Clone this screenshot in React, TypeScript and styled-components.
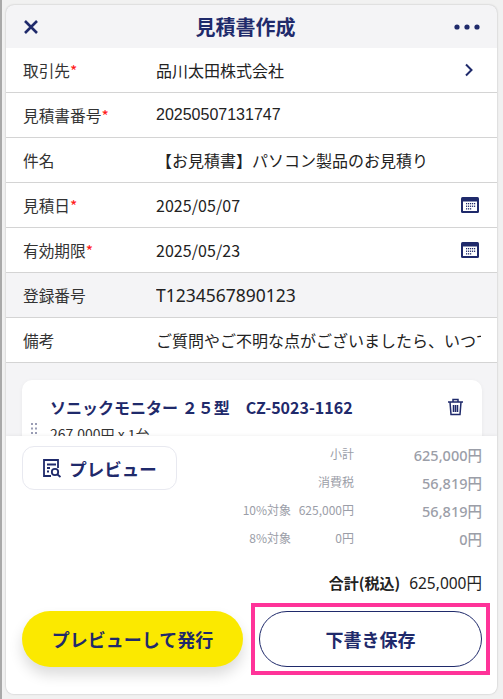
import React from "react";
import styled, { createGlobalStyle } from "styled-components";

const Global = createGlobalStyle`
  html, body { margin: 0; padding: 0; background: #f1f1f1; }
  body { font-family: "Noto Sans", "Noto Sans CJK JP", sans-serif; }
  * { box-sizing: border-box; }
`;
const NAVY = "#1f2a6b";
const Page = styled.div`
  width: 503px; height: 699px; padding: 5px 6px 5px 4px;
  border-left: 2px solid #a9a9a9;
  overflow: hidden;
`;
const Card = styled.div`
  width: 491px; height: 689px; border-radius: 8px; overflow: hidden; background: #f4f4f6;
  display: flex; flex-direction: column;
  box-shadow: 0 0 2px rgba(0,0,0,.25);
`;
const Header = styled.header`
  height: 43px; flex: none; display: flex; align-items: center; justify-content: space-between;
  padding: 0 17px 0 17px; position: relative; color: ${NAVY};
`;
const Title = styled.h1`
  margin: 0; position: absolute; left: 0; right: 12px; text-align: center;
  font: 700 20px "Noto Sans CJK JP", sans-serif; color: ${NAVY}; pointer-events: none;
`;
const IconSlot = styled.span`display: inline-flex; align-items: center; justify-content: center; flex: none;`;
const Chevron = styled(IconSlot)`margin-right: 5px;`;
const Row = styled.div<{ $gray?: boolean }>`
  height: 45px; flex: none; display: flex; align-items: center; padding: 0 18px 0 17px;
  background: ${(p) => (p.$gray ? "#f4f4f6" : "#fff")}; border-bottom: 1px solid #d4d4d4;
`;
const Label = styled.div`
  width: 133px; flex: none; font: 400 15.7px "Noto Sans CJK JP", sans-serif; color: #333;
  em { color: #ff1a1a; font-style: normal; }
`;
const Value = styled.div<{ $kind?: "date" | "mono" | "num" }>`
  flex: 1; min-width: 0; white-space: nowrap; overflow: hidden; color: #222;
  font: 400 16px "Noto Sans CJK JP", sans-serif;
  ${(p) => p.$kind === "date" && `letter-spacing: .05px;`}
  ${(p) => p.$kind === "num" && `font: 400 16px "Liberation Sans", sans-serif;`}
  ${(p) => p.$kind === "mono" && `font: 400 17.5px "Noto Sans", sans-serif;`}
`;
const Note = styled(Value)`flex: none; width: 325px; `;
const ListArea = styled.div`height: 73px; flex: none; overflow: hidden; padding: 17px 15px 0 16px;`;
const ItemCard = styled.div`
  background: #fff; border-radius: 10px; height: 90px; padding: 15px 18px 0 28px; position: relative;
  box-shadow: 0 1px 4px rgba(0,0,0,.05);
`;
const ItemTop = styled.div`display: flex; align-items: center; justify-content: space-between;`;
const ItemName = styled.div`font: 700 16px "Noto Sans CJK JP", sans-serif; color: ${NAVY};`;
const ItemSub = styled.div`margin-top: 5px; font: 400 14px "Noto Sans CJK JP", sans-serif; color: #333;`;
const Grip = styled.span`position: absolute; left: 9px; top: 43px; color: #9a9db5; display: flex;`;
const Footer = styled.footer`
  flex: 1; background: #fff; padding: 10px 15px 0 16px; display: flex; flex-direction: column;
  box-shadow: 0 -1px 3px rgba(0,0,0,.05); position: relative;
`;
const FooterTop = styled.div`display: flex; justify-content: space-between; height: 110px;`;
const PreviewButton = styled.button`
  width: 155px; height: 44px; border: 1px solid #e8e9f0; border-radius: 12px; background: #fff;
  display: flex; align-items: center; justify-content: center; gap: 7px; padding: 0;
  color: ${NAVY}; font: 700 17.5px "Noto Sans CJK JP", sans-serif;
`;
const Summary = styled.div`display: grid; grid-template-columns: 55px 63px 128px; grid-auto-rows: 28px; margin-top: -6px; align-items: center; color: #9b9ea8;`;
const SumLabel = styled.span`font: 400 12px "Noto Sans CJK JP", sans-serif; text-align: right; white-space: nowrap; margin-top: -2px;`;
const SumAmount = styled.span`font: 500 14.5px "Noto Sans", "Noto Sans CJK JP", sans-serif; text-align: right; white-space: nowrap;`;
const SumWide = styled(SumLabel)`grid-column: 1 / 3;`;
const Total = styled.div`
  margin-top: 15px; height: 22px; display: flex; justify-content: flex-end; align-items: center; gap: 9px; color: #222;
  font: 400 15.5px "Noto Sans", "Noto Sans CJK JP", sans-serif;
  b { font: 700 15px "Noto Sans CJK JP", sans-serif; }
`;
const Actions = styled.div`display: flex; align-items: center; margin-top: 10px; `;
const Primary = styled.button`
  width: 221px; height: 56px; border: 0; border-radius: 28px; background: #fbe900; color: ${NAVY};
  font: 700 18px "Noto Sans CJK JP", sans-serif; box-shadow: 0 8px 14px rgba(0,0,0,.14); padding: 0; flex: none;
`;
const Highlight = styled.div`
  margin-left: 8px; margin-right: -8px; padding: 4px; border: 4px solid #ff3399; flex: none;
`;
const Secondary = styled.button`
  width: 223px; height: 56px; border: 1px solid ${NAVY}; border-radius: 28px; background: #fff; color: ${NAVY};
  font: 700 18px "Noto Sans CJK JP", sans-serif; padding: 0; display: block;
`;

const Calendar = () => (
  <svg width="18" height="16" viewBox="0 0 18 16">
    <rect width="18" height="16" rx="1.5" fill={NAVY} />
    <rect x="2" y="4.5" width="14" height="9.5" fill="#fff" />
    {[0, 1, 2].map((r) =>
      [0, 1, 2, 3, 4].map((c) => <rect key={`${r}-${c}`} x={5 + c * 2} y={6 + r * 2.6} width="1.2" height="1.3" fill={NAVY} opacity={r === 2 && c > 2 ? 0 : 1} />)
    )}
  </svg>
);

export default function App() {
  return (
    <Page>
      <Global />
      <Card>
        <Header>
          <Title>見積書作成</Title>
          <IconSlot>
            <svg width="16" height="16" viewBox="0 0 16 16"><path d="M2 2l12 12M14 2L2 14" stroke={NAVY} strokeWidth="2.6" fill="none" /></svg>
          </IconSlot>
          <IconSlot>
            <svg width="26" height="6" viewBox="0 0 26 6"><circle cx="3" cy="3" r="2.6" fill={NAVY} /><circle cx="13" cy="3" r="2.6" fill={NAVY} /><circle cx="23" cy="3" r="2.6" fill={NAVY} /></svg>
          </IconSlot>
        </Header>
        <Row><Label>取引先<em>*</em></Label><Value>品川太田株式会社</Value>
          <Chevron><svg width="10" height="14" viewBox="0 0 10 14"><path d="M2 1.5L7.5 7 2 12.5" stroke={NAVY} strokeWidth="2" fill="none" /></svg></Chevron>
        </Row>
        <Row><Label>見積書番号<em>*</em></Label><Value $kind="num">20250507131747</Value></Row>
        <Row><Label>件名</Label><Value>【お見積書】パソコン製品のお見積り</Value></Row>
        <Row><Label>見積日<em>*</em></Label><Value $kind="date">2025/05/07</Value><Calendar /></Row>
        <Row><Label>有効期限<em>*</em></Label><Value $kind="date">2025/05/23</Value><Calendar /></Row>
        <Row $gray><Label>登録番号</Label><Value $kind="mono">T1234567890123</Value></Row>
        <Row><Label>備考</Label><Note>ご質問やご不明な点がございましたら、いつでもお問い合わせください。</Note></Row>
        <ListArea>
          <ItemCard>
            <Grip>
              <svg width="6" height="11" viewBox="0 0 6 11" fill="currentColor">
                {[0, 1, 2].map((r) => [0, 1].map((c) => <rect key={`${r}${c}`} x={c * 4} y={r * 4.5} width="2" height="2" />))}
              </svg>
            </Grip>
            <ItemTop>
              <ItemName>ソニックモニター ２５型　CZ-5023-1162</ItemName>
              <IconSlot>
                <svg width="17" height="18" viewBox="0 0 17 18" fill="none" stroke={NAVY} strokeWidth="1.5">
                  <path d="M1 4h15M6 4V1.5h5V4M3 4l1 12.5h9L14 4M6.5 7v7M8.5 7v7M10.5 7v7" />
                </svg>
              </IconSlot>
            </ItemTop>
            <ItemSub>267,000円 x 1台</ItemSub>
          </ItemCard>
        </ListArea>
        <Footer>
          <FooterTop>
            <PreviewButton>
              <svg width="20" height="20" viewBox="0 0 20 20" fill="none" stroke={NAVY} strokeWidth="1.8">
                <path d="M9 18H2V2h14v8M5 6.5h9M5 10h3M5 13.5h2" />
                <circle cx="13" cy="14" r="3.2" /><path d="M15.5 16.5L18.5 19" />
              </svg>
              プレビュー
            </PreviewButton>
            <Summary>
              <SumWide>小計</SumWide><SumAmount>625,000円</SumAmount>
              <SumWide>消費税</SumWide><SumAmount>56,819円</SumAmount>
              <SumLabel>10%対象</SumLabel><SumLabel>625,000円</SumLabel><SumAmount>56,819円</SumAmount>
              <SumLabel>8%対象</SumLabel><SumLabel>0円</SumLabel><SumAmount>0円</SumAmount>
            </Summary>
          </FooterTop>
          <Total><b>合計(税込)</b><span>625,000円</span></Total>
          <Actions>
            <Primary>プレビューして発行</Primary>
            <Highlight><Secondary>下書き保存</Secondary></Highlight>
          </Actions>
        </Footer>
      </Card>
    </Page>
  );
}
